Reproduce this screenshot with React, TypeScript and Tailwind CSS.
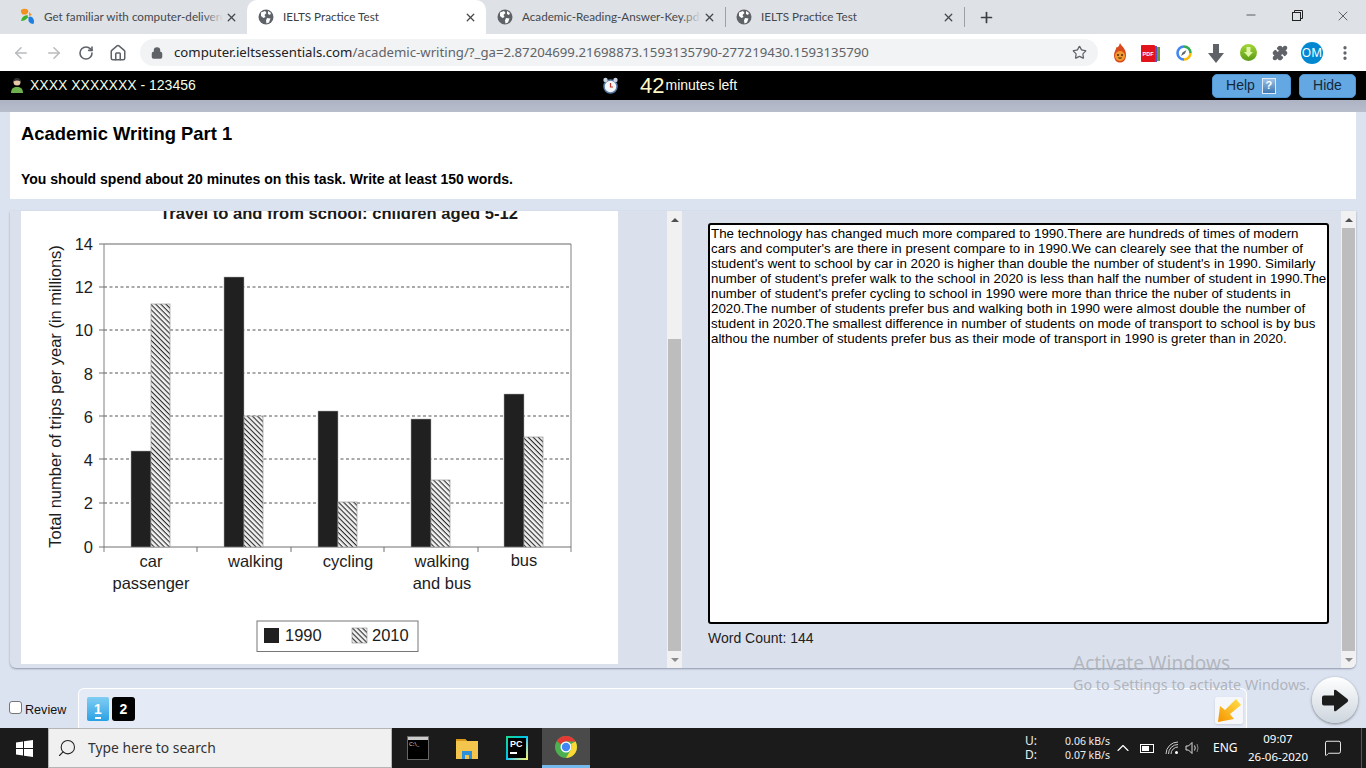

import React from "react";
import { ArrowLeft, ArrowRight, RotateCw, Home, Lock, Star, X, Plus, Minus, Search, MessageSquare, ChevronUp, Puzzle, EllipsisVertical } from "lucide-react";

const Globe = ({ c = "#5f6368" }: { c?: string }) => (
  <svg width="16" height="16" viewBox="0 0 16 16" className="shrink-0">
    <circle cx="8" cy="8" r="7.5" fill={c} />
    <path d="M3 3.5 L7 2 L8.5 4 L6.5 6 L7.5 8 L5.5 9 L3 7Z M9 9 L12.5 9.5 L11 13.5 L8.5 14.5 L8 11.5Z M10 2 L13 4 L12 6 L10 5Z" fill="#fff" />
  </svg>
);

const Tab = ({ icon, title, active, fade, sep }: { icon: React.ReactNode; title: string; active?: boolean; fade?: boolean; sep?: boolean }) => (
  <div className={`w-[239px] h-[34px] relative flex items-center shrink-0 pl-[9px] ${active ? "bg-white rounded-t-[10px]" : ""}`}>
    <div className="mr-[7px] flex w-[20px] justify-center shrink-0">{icon}</div>
    <div className={`flex-1 overflow-hidden whitespace-nowrap text-[11.7px] ${active ? "text-[#3c4043]" : "text-[#45484d]"}`}>{title}</div>
    {fade && <div className="absolute right-[24px] top-0 h-full w-[20px] bg-gradient-to-r from-transparent to-[#dee1e6]" />}
    <X size={13} strokeWidth={2.4} className="ml-[2px] mr-[9px] text-[#44474b] shrink-0" />
    {sep && <div className="absolute right-[-1px] top-[7px] w-px h-[20px] bg-[#9da0a5]" />}
  </div>
);

const LINES = [
  "The technology has changed much more compared to 1990.There are hundreds of times of modern",
  "cars and computer's are there in present compare to in 1990.We can clearely see that the number of",
  "student's went to school by car in 2020 is higher than double the number of student's in 1990. Similarly",
  "number of student's prefer walk to the school in 2020 is less than half the number of student in 1990.The",
  "number of student's prefer cycling to school in 1990 were more than thrice the nuber of students in",
  "2020.The number of students prefer bus and walking both in 1990 were almost double the number of",
  "student in 2020.The smallest difference in number of students on mode of transport to school is by bus",
  "althou the number of students prefer bus as their mode of transport in 1990 is greter than in 2020.",
];

const BARS = [
  { x: 131, a: 451, b: 304 },
  { x: 224, a: 277, b: 416 },
  { x: 318, a: 411, b: 502 },
  { x: 411, a: 419, b: 480 },
  { x: 504, a: 394, b: 437 },
];

const Chart = () => (
  <svg viewBox="21 211 597 453" width="597" height="453" className="block shrink-0 bg-white" style={{ fontFamily: "'Liberation Sans', Arial, sans-serif" }}>
    <defs>
      <pattern id="hatch" width="3.6" height="3.6" patternUnits="userSpaceOnUse" patternTransform="rotate(45)">
        <rect width="3.6" height="3.6" fill="#f2f2f2" />
        <rect width="3.6" height="1.1" y="0" fill="#2a2a2a" />
      </pattern>
    </defs>
    <text x="339" y="219" textAnchor="middle" fontSize="16.6" fontWeight="700" fill="#1a1a1a">Travel to and from school: children aged 5-12</text>
    {[287, 330, 373, 416, 459, 503].map((y) => (
      <line key={y} x1="104" x2="571" y1={y} y2={y} stroke="#555" strokeWidth="1" strokeDasharray="3 2.5" />
    ))}
    <line x1="104" x2="571" y1="244" y2="244" stroke="#666" strokeWidth="1" />
    <line x1="104" x2="104" y1="244" y2="552" stroke="#808080" strokeWidth="1" />
    <line x1="571" x2="571" y1="244" y2="552" stroke="#808080" strokeWidth="1" />
    <line x1="99" x2="571" y1="547" y2="547" stroke="#707070" strokeWidth="1" />
    {[244, 287, 330, 373, 416, 459, 503].map((y) => (
      <line key={y} x1="99" x2="104" y1={y} y2={y} stroke="#707070" />
    ))}
    {[197, 291, 384, 478].map((x) => (
      <line key={x} x1={x} x2={x} y1="547" y2="552" stroke="#707070" />
    ))}
    {[["14", 244], ["12", 287], ["10", 330], ["8", 374], ["6", 417], ["4", 460], ["2", 503], ["0", 547]].map(([t, y]) => (
      <text key={String(t)} x="93" y={Number(y) + 6} textAnchor="end" fontSize="16.5" fill="#1c1c1c">{t}</text>
    ))}
    <text transform="translate(61 396.5) rotate(-90)" textAnchor="middle" fontSize="16.5" fill="#1c1c1c">Total number of trips per year (in millions)</text>
    {BARS.map((b) => (
      <g key={b.x}>
        <rect x={b.x} y={b.a} width="20" height={547 - b.a} fill="#202020" stroke="#aaa" strokeWidth="0.5" />
        <rect x={b.x + 20} y={b.b} width="19" height={547 - b.b} fill="url(#hatch)" stroke="#999" strokeWidth="0.7" />
      </g>
    ))}
    <g fontSize="16.5" fill="#1c1c1c" textAnchor="middle">
      <text x="151" y="567">car</text>
      <text x="151" y="589">passenger</text>
      <text x="255.500" y="567">walking</text>
      <text x="348" y="567">cycling</text>
      <text x="442" y="567">walking</text>
      <text x="442" y="589">and bus</text>
      <text x="524" y="566">bus</text>
    </g>
    <rect x="257" y="621" width="161" height="30.500" fill="#fff" stroke="#777" />
    <rect x="264" y="628" width="15" height="15" fill="#202020" />
    <text x="285" y="641" fontSize="16.5" fill="#1c1c1c">1990</text>
    <rect x="352" y="628" width="15" height="15" fill="url(#hatch)" stroke="#888" strokeWidth="0.6" />
    <text x="372" y="641" fontSize="16.5" fill="#1c1c1c">2010</text>
  </svg>
);

const ScrollBar = ({ thumbTop, bg }: { thumbTop: string; bg: string }) => (
  <div className={`w-[15px] h-full flex flex-col items-center ${bg} shrink-0`}>
    <div className="h-[17px] flex items-center justify-center">
      <div className="w-0 h-0 border-l-[4px] border-r-[4px] border-b-[4px] border-l-transparent border-r-transparent border-b-[#505050]" />
    </div>
    <div className={`${thumbTop} shrink-0`} />
    <div className="flex-1 w-[13px] bg-[#bdbdbd]" />
    <div className="h-[17px] flex items-center justify-center shrink-0">
      <div className="w-0 h-0 border-l-[4px] border-r-[4px] border-t-[4px] border-l-transparent border-r-transparent border-t-[#8a8a8a]" />
    </div>
  </div>
);

export default function App() {
  return (
    <div className="w-[1366px] h-[768px] overflow-hidden relative flex flex-col bg-[#dce3f0]" style={{ fontFamily: "'Liberation Sans', Arial, sans-serif" }}>
      {/* Tab strip */}
      <div className="h-[34px] bg-[#dee1e6] flex items-end pl-[8px] shrink-0" style={{ fontFamily: "Lato, 'Noto Sans', sans-serif" }}>
        <Tab fade title="Get familiar with computer-delivered IELTS" icon={
          <svg width="18" height="18" viewBox="0 0 18 18"><path d="M3 2 Q7 -0.500 10 2 Q11 5 8 6.500 L4.500 6.500 Q2.500 4.500 3 2Z" fill="#f4901e"/><path d="M3 13 Q3 10 6 8 L9.500 7 L10 9.500 Q7 13 3 13Z" fill="#43b02a"/><path d="M10.500 9 Q13 7.500 15 10 Q17 13 15.500 16 Q12 16 10.500 13Z" fill="#1f7fe0"/><path d="M11 4 L14 7 L11 8Z" fill="#f4901e"/></svg>
        } />
        <Tab active title="IELTS Practice Test" icon={<Globe />} />
        <Tab fade sep title="Academic-Reading-Answer-Key.pdf" icon={<Globe />} />
        <Tab sep title="IELTS Practice Test" icon={<Globe />} />
        <div className="h-[34px] flex items-center ml-[14px]"><Plus size={17} strokeWidth={2.4} className="text-[#3c4043]" /></div>
        <div className="flex-1" />
        <div className="h-[34px] w-[138px] flex items-start text-[#333] pt-[8px]">
          <div className="w-[46px] flex justify-center"><Minus size={14} strokeWidth={1.3} /></div>
          <div className="w-[46px] flex justify-center pt-[2px]">
            <svg width="11" height="11" viewBox="0 0 11 11" fill="none" stroke="#222" strokeWidth="1"><rect x="0.500" y="2.500" width="8" height="8" /><path d="M2.500 2.500 V0.500 H10.500 V8.500 H8.500" /></svg>
          </div>
          <div className="w-[46px] flex justify-center"><X size={16} strokeWidth={1.1} /></div>
        </div>
      </div>

      {/* Toolbar */}
      <div className="h-[37px] bg-white flex items-center shrink-0 relative" style={{ fontFamily: "'Noto Sans', sans-serif" }}>
        <div className="w-[140px] flex items-center text-[#5f6368] shrink-0">
          <ArrowLeft size={18} strokeWidth={2} className="ml-[12px] text-[#b8babd]" />
          <ArrowRight size={18} strokeWidth={2} className="ml-[15px] text-[#b8babd]" />
          <RotateCw size={16} strokeWidth={2.4} className="ml-[15px] text-[#5f6368]" />
          <Home size={18} strokeWidth={2} className="ml-[15px] text-[#5f6368]" />
        </div>
        <div className="w-[958px] h-[27px] rounded-full bg-[#f1f3f4] flex items-center shrink-0">
          <Lock size={12} strokeWidth={3} className="ml-[11px] text-[#5f6368]" fill="#5f6368" />
          <div className="ml-[11px] text-[13.2px] whitespace-nowrap text-[#5f6368] flex-1">
            <span className="text-[#202124]">computer.ieltsessentials.com</span>/academic-writing/?_ga=2.87204699.21698873.1593135790-277219430.1593135790
          </div>
          <Star size={15} strokeWidth={2} className="mr-[11px] text-[#5f6368]" />
        </div>
        <div className="flex-1 flex items-center relative">
          <div className="absolute left-[13px] top-[-10px]">
            <svg width="18" height="20" viewBox="0 0 18 20"><path d="M9 0 C10 3 15 5 15 12 C15 17 12.500 19.500 9 19.500 C5.500 19.500 3 17 3 12 C3 9 5 7 5.500 4 C7 5 8 3 9 0Z" fill="#d8491c"/><circle cx="9" cy="13" r="5" fill="#f29a2e"/><circle cx="7" cy="12" r="1" fill="#4a2a10"/><circle cx="11" cy="12" r="1" fill="#4a2a10"/><path d="M6.500 14.500 Q9 17 11.500 14.500Z" fill="#4a2a10"/></svg>
          </div>
          <div className="absolute left-[43px] top-[-9px]">
            <svg width="20" height="19" viewBox="0 0 20 19"><rect x="15" y="3" width="4" height="14" fill="#6b9a3c"/><rect x="11" y="2" width="5" height="16" fill="#5a4fd0"/><rect x="0" y="1" width="14" height="17" rx="1" fill="#e3131c"/><text x="1.500" y="11.500" fontSize="5.5" fontWeight="700" fill="#fff" fontFamily="Liberation Sans">PDF</text></svg>
          </div>
          <div className="absolute left-[78px] top-[-8px]">
            <svg width="16" height="16" viewBox="0 0 16 16" fill="none"><path d="M8 1.500 A6.500 6.500 0 0 1 14.500 8" stroke="#34a853" strokeWidth="2.6"/><path d="M14.500 8 A6.500 6.500 0 0 1 8 14.500" stroke="#fbbc05" strokeWidth="2.6"/><path d="M8 14.500 A6.500 6.500 0 0 1 1.500 8 A6.500 6.500 0 0 1 8 1.500" stroke="#4285f4" strokeWidth="2.6"/><path d="M5 11 L6.500 7.500 L10.500 5 L9 8.500Z" fill="#5f6368"/></svg>
          </div>
          <div className="absolute left-[110px] top-[-9px]">
            <svg width="16" height="19" viewBox="0 0 16 19"><path d="M5 0 H11 V9 H16 L8 19 L0 9 H5Z" fill="#5f6368"/></svg>
          </div>
          <div className="absolute left-[142px] top-[-9px]">
            <svg width="17" height="17" viewBox="0 0 17 17"><defs><linearGradient id="gr" x1="0" y1="0" x2="0" y2="1"><stop offset="0" stopColor="#a5d63a"/><stop offset="1" stopColor="#5a9a12"/></linearGradient></defs><circle cx="8.500" cy="8.500" r="8.500" fill="url(#gr)"/><path d="M6.500 3 h4 v5 h2.500 L8.500 13 L4 8 H6.500Z" fill="#dff5a8"/></svg>
          </div>
          <Puzzle size={16} strokeWidth={2} fill="#5f6368" className="absolute left-[174px] top-[-8px] text-[#5f6368]" />
          <div className="absolute left-[203px] top-[-11px] w-[22px] h-[22px] rounded-full bg-[#0288d1] text-white text-[12px] flex items-center justify-center">OM</div>
          <EllipsisVertical size={18} strokeWidth={2.4} className="absolute left-[238px] top-[-9px] text-[#5f6368]" />
        </div>
      </div>

      {/* Black bar */}
      <div className="h-[29px] bg-black flex items-center shrink-0 text-white relative">
        <svg width="14" height="17" viewBox="0 0 14 17" className="ml-[10px]"><circle cx="7" cy="5" r="3.500" fill="#e8c8a8"/><path d="M3.500 4.500 Q3.500 1 7 1 Q10.500 1 10.500 4.500 Q7 2.500 3.500 4.500Z" fill="#2a2a2a"/><path d="M1 16 C1 11.500 3.500 10 7 10 C10.500 10 13 11.500 13 16Z" fill="#6fb04f"/></svg>
        <div className="ml-[6px] text-[14px] text-[#f2ffe8] w-[192px] whitespace-nowrap">XXXX XXXXXXX - 123456</div>
        <svg width="17" height="17" viewBox="0 0 17 17" className="ml-[380px]"><circle cx="8.500" cy="9.500" r="6.500" fill="#f4f6fa" stroke="#5a7ea8" strokeWidth="1.500"/><circle cx="3.500" cy="3" r="2.200" fill="#c6d0de"/><circle cx="13.500" cy="3" r="2.200" fill="#c6d0de"/><path d="M8.500 6 V10 H11" stroke="#c0392b" strokeWidth="1.200" fill="none"/></svg>
        <div className="ml-[21px] text-[22px] leading-none text-[#fff8c4]">42</div>
        <div className="ml-[1px] text-[14px] text-[#fffbe4] whitespace-nowrap">minutes left</div>
        <div className="flex-1" />
        <div className="w-[79px] h-[24px] rounded-[5px] bg-[#63a8e2] border border-[#4e95d2] text-[#14283c] text-[14px] flex items-center justify-center gap-[7px] pr-[1px]">
          Help
          <span className="w-[14px] h-[16px] bg-gradient-to-b from-[#9ec2e6] to-[#3f78b3] border border-[#dfeaf5] text-white text-[11px] font-bold leading-none flex items-center justify-center">?</span>
        </div>
        <div className="ml-[8px] mr-[10px] w-[57px] h-[24px] rounded-[5px] bg-[#63a8e2] border border-[#4e95d2] text-[#14283c] text-[14px] flex items-center justify-center">Hide</div>
      </div>

      {/* Strip */}
      <div className="h-[12px] bg-gradient-to-b from-[#adb3c3] to-[#b8bdcc] shrink-0" />

      {/* Header */}
      <div className="h-[87px] mx-[10px] w-[1346px] bg-white shrink-0 pl-[11px] text-black">
        <div className="pt-[10px] text-[18.4px] leading-[24px] font-bold">Academic Writing Part 1</div>
        <div className="pt-[24px] text-[14px] leading-[18px] font-bold">You should spend about 20 minutes on this task. Write at least 150 words.</div>
      </div>

      {/* Main panel */}
      <div className="mt-[12px] ml-[10px] w-[1346px] h-[457px] bg-[#dbe1ec] rounded-b-[6px] shadow-[0_1px_2px_rgba(90,100,120,0.6)] flex shrink-0 overflow-hidden">
        <div className="ml-[11px] w-[597px] shrink-0"><Chart /></div>
        <div className="w-[49px] shrink-0" />
        <ScrollBar thumbTop="h-[111px]" bg="bg-[#f1f1f1]" />
        <div className="w-[26px] shrink-0" />
        <div className="w-[621px] shrink-0 pt-[12px]">
          <div className="h-[401px] bg-white border-2 border-black rounded-[3px] text-[13.33px] leading-[15px] text-black pl-[1px] pt-[1px] whitespace-nowrap overflow-hidden">
            {LINES.map((l) => <div key={l}>{l}</div>)}
          </div>
          <div className="mt-[7px] text-[14px] leading-[15px] text-[#222]">Word Count: 144</div>
        </div>
        <div className="w-[12px] shrink-0" />
        <ScrollBar thumbTop="h-0" bg="bg-[#f1f1f1]" />
      </div>

      {/* Bottom nav */}
      <div className="mt-[20px] h-[40px] flex shrink-0 relative">
        <div className="w-[78px] flex items-center pl-[9px] shrink-0 pt-[4px]">
          <span className="w-[13px] h-[13px] rounded-[3px] border border-[#767676] bg-white shrink-0 -mt-[6px]" />
          <span className="ml-[3px] text-[12.6px] text-[#111]">Review</span>
        </div>
        <div className="w-[1169px] h-[40px] rounded-t-[6px] border-t border-l border-r border-white bg-[#e4eaf6] flex items-start pl-[8px] pt-[8px] shrink-0">
          <div className="w-[22px] h-[24px] rounded-[2px] bg-gradient-to-b from-[#7fcdf2] to-[#25a1e4] text-white text-[14px] font-bold flex flex-col items-center justify-center leading-none relative">
            1
            <span className="absolute bottom-[2px] w-[6px] h-[2px] bg-white" />
          </div>
          <div className="ml-[3px] w-[23px] h-[24px] rounded-[3px] bg-black text-white text-[14px] font-bold flex items-center justify-center">2</div>
          <div className="flex-1" />
          <div className="mr-[3px] w-[28px] h-[27px] bg-[#f6f7fa] rounded-[2px] flex items-center justify-center shadow-sm">
            <svg width="26" height="26" viewBox="0 0 26 26"><defs><linearGradient id="nt" x1="1" y1="0" x2="0" y2="1"><stop offset="0" stopColor="#ffe14a"/><stop offset="1" stopColor="#f59300"/></linearGradient></defs><path d="M20 1 L25 7 L14 16 L18 21 L2 24 L4 8 L9 12Z" fill="url(#nt)"/></svg>
          </div>
        </div>
      </div>

      {/* Taskbar */}
      <div className="h-[40px] bg-[#1b1b1b] flex items-center shrink-0 text-white" style={{ fontFamily: "'Noto Sans', sans-serif" }}>
        <div className="w-[48px] flex justify-center shrink-0">
          <svg width="17" height="17" viewBox="0 0 17 17" fill="#fff"><path d="M0 2.500 L7 1.500 V8 H0Z M8 1.300 L17 0 V8 H8Z M0 9 H7 V15.500 L0 14.500Z M8 9 H17 V17 L8 15.700Z"/></svg>
        </div>
        <div className="w-[344px] h-[40px] bg-[#f0f0f0] border border-[#b5b5b5] flex items-center pl-[8px] shrink-0">
          <Search size={20} strokeWidth={1.300} className="text-[#222] -scale-x-100" />
          <span className="ml-[11px] text-[13.900px] text-[#333]">Type here to search</span>
        </div>
        <div className="w-[48px] flex justify-center shrink-0 ml-[2px]">
          <div className="w-[22px] h-[24px] bg-black border border-[#666] relative">
            <div className="h-[3px] bg-[#ccc]" />
            <span className="absolute left-[1px] top-[4px] text-[6px] leading-[7px] text-[#ddd]">C:\_</span>
          </div>
        </div>
        <div className="w-[50px] flex justify-center shrink-0">
          <svg width="22" height="24" viewBox="0 0 22 24"><path d="M0 3 H9 L11 5 H22 V23 H0Z" fill="#f3c54c"/><path d="M0 3 H9 L11 5 H0Z" fill="#d99a1c"/><rect x="6" y="15" width="10" height="8" fill="#2f8fd8"/><rect x="9" y="19" width="4" height="4" fill="#f3c54c"/></svg>
        </div>
        <div className="w-[50px] flex justify-center shrink-0">
          <div className="w-[22px] h-[24px] bg-gradient-to-br from-[#21d789] via-[#07c3f2] to-[#fcf84a] p-[2px]">
            <div className="w-full h-full bg-black text-white text-[9px] font-bold leading-[10px] pl-[2px] pt-[1px]" style={{ fontFamily: "'Liberation Sans', sans-serif" }}>
              PC
              <div className="w-[7px] h-[1.500px] bg-white mt-[3px]" />
            </div>
          </div>
        </div>
        <div className="w-[48px] h-[40px] bg-[#4a4a4a] border-b-[3px] border-[#76b9ed] flex justify-center items-center shrink-0">
          <svg width="24" height="24" viewBox="0 0 24 24">
            <circle cx="12" cy="12" r="11" fill="#4caf50" />
            <path d="M12 1 A11 11 0 0 1 21.500 6.500 L12 6.500 A5.500 5.500 0 0 0 7 9.500 L2.800 6 A11 11 0 0 1 12 1Z" fill="#e53935" />
            <path d="M21.500 6.500 A11 11 0 0 1 12 23 L16.800 14.700 A5.500 5.500 0 0 0 17 9Z" fill="#fdd835" />
            <circle cx="12" cy="12" r="5.500" fill="#fff" /><circle cx="12" cy="12" r="4.200" fill="#4285f4" />
          </svg>
        </div>
        <div className="flex-1" />
        <div className="text-[12px] leading-[14px] w-[31px] text-[#eee] shrink-0">
          <div>U:</div><div>D:</div>
        </div>
        <div className="text-[10.500px] leading-[14px] w-[54px] text-[#eee] text-right shrink-0 whitespace-nowrap">
          <div>0.06 kB/s</div><div>0.07 kB/s</div>
        </div>
        <ChevronUp size={20} strokeWidth={1.400} className="ml-[3px] text-white shrink-0" />
        <svg width="15" height="9" viewBox="0 0 15 9" className="ml-[7px] shrink-0" fill="none" stroke="#fff"><rect x="0.500" y="0.500" width="13" height="8"/><rect x="2" y="2" width="7" height="5" fill="#fff" stroke="none"/></svg>
        <svg width="14" height="14" viewBox="0 0 14 14" className="ml-[10px] shrink-0" fill="none" stroke="#ccc" strokeWidth="1"><path d="M1 13 A12 12 0 0 1 13 1 M3.500 13 A9.500 9.500 0 0 1 13 3.500 M6 13 A7 7 0 0 1 13 6"/><circle cx="11.500" cy="11.500" r="1.500" fill="#fff" stroke="none"/></svg>
        <svg width="16" height="14" viewBox="0 0 16 14" className="ml-[6px] shrink-0" fill="none" stroke="#ddd" strokeWidth="1"><path d="M1 5 H3.500 L7 1.500 V12.500 L3.500 9 H1Z M9.500 4.500 Q11 7 9.500 9.500"/><path d="M12 3 Q14 7 12 11" stroke="#888"/></svg>
        <div className="ml-[12px] text-[12px] text-white w-[30px] shrink-0">ENG</div>
        <div className="ml-[4px] w-[62px] text-[11.500px] leading-[18px] text-center text-white shrink-0 whitespace-nowrap flex flex-col items-center -mt-[1px]">
          <div>09:07</div><div>26-06-2020</div>
        </div>
        <div className="w-[52px] flex justify-center pr-[4px] shrink-0">
          <MessageSquare size={18} strokeWidth={1.200} className="text-white" />
        </div>
        <div className="w-[5px] h-[40px] border-l border-[#555] shrink-0" />
      </div>

      {/* Overlays */}
      <div className="absolute left-[1073px] top-[651px] text-[19px] leading-[24px] text-[#a8acb3]/80 whitespace-nowrap" style={{ fontFamily: "'Noto Sans', sans-serif" }}>Activate Windows</div>
      <div className="absolute left-[1073px] top-[676px] text-[14.300px] leading-[18px] text-[#b0b4bc] whitespace-nowrap" style={{ fontFamily: "'Noto Sans', sans-serif" }}>Go to Settings to activate Windows.</div>
      <div className="absolute left-[1312px] top-[677px] w-[46px] h-[46px] rounded-full bg-gradient-to-b from-[#ffffff] to-[#cdd5dd] shadow-[0_1px_3px_rgba(0,0,0,0.45)] flex items-center justify-center">
        <svg width="28" height="23" viewBox="0 0 28 23"><path d="M1 8.500 Q1 6.500 3 6.500 H13 V2 Q13 0 15 1 L26.500 10 Q28 11.500 26.500 13 L15 22 Q13 23 13 21 V16.500 H3 Q1 16.500 1 14.500Z" fill="#1c1c1c"/></svg>
      </div>
    </div>
  );
}
